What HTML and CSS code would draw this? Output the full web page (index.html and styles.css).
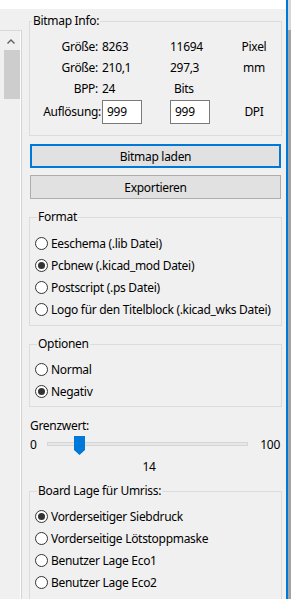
FILE: index.html
```html
<!DOCTYPE html>
<html>
<head>
<meta charset="utf-8">
<link rel="stylesheet" href="styles.css">
</head>
<body>
<div class="window">
  <div class="main">
    <div class="topbar"></div>
    <div class="body">
      <div class="leftcol">
        <div class="scrollpanel">
          <svg class="uparrow" width="8" height="5" viewBox="0 0 8 5"><path d="M0.5 4.5L4 1L7.5 4.5" fill="none" stroke="#606060" stroke-width="1.4"/></svg>
          <div class="thumb"></div>
        </div>
      </div>
      <div class="content">
        <fieldset class="group info">
          <legend>Bitmap Info:</legend>
          <div class="infogrid">
            <span class="lbl">Größe:</span><span>8263</span><span>11694</span><span class="unit">Pixel</span>
            <span class="lbl">Größe:</span><span>210,1</span><span>297,3</span><span class="unit">mm</span>
            <span class="lbl">BPP:</span><span>24</span><span class="bits">Bits</span><span class="unit"></span>
            <span class="lbl wide">Auflösung:</span><span><span class="field">999</span></span><span><span class="field">999</span></span><span class="unit">DPI</span>
          </div>
        </fieldset>
        <div class="btn primary">Bitmap laden</div>
        <div class="btn second">Exportieren</div>
        <fieldset class="group format">
          <legend>Format</legend>
          <div class="radio"><span class="circle"></span>Eeschema (.lib Datei)</div>
          <div class="radio"><span class="circle on"></span>Pcbnew (.kicad_mod Datei)</div>
          <div class="radio"><span class="circle"></span>Postscript (.ps Datei)</div>
          <div class="radio"><span class="circle"></span>Logo für den Titelblock (.kicad_wks Datei)</div>
        </fieldset>
        <fieldset class="group options">
          <legend>Optionen</legend>
          <div class="radio"><span class="circle"></span>Normal</div>
          <div class="radio"><span class="circle on"></span>Negativ</div>
        </fieldset>
        <div class="sliderlabel">Grenzwert:</div>
        <div class="slider">
          <span class="min">0</span>
          <div class="track">
            <svg class="knob" width="11" height="19" viewBox="0 0 11 19"><path d="M0 0H11V14L5.5 19L0 14Z" fill="#0078d7"/></svg>
          </div>
          <span class="max">100</span>
        </div>
        <div class="value">14</div>
        <fieldset class="group board">
          <legend>Board Lage für Umriss:</legend>
          <div class="radio"><span class="circle on"></span>Vorderseitiger Siebdruck</div>
          <div class="radio"><span class="circle"></span>Vorderseitige Lötstoppmaske</div>
          <div class="radio"><span class="circle"></span>Benutzer Lage Eco1</div>
          <div class="radio"><span class="circle"></span>Benutzer Lage Eco2</div>
        </fieldset>
      </div>
    </div>
  </div>
  <div class="blueline"></div>
  <div class="gutter"><div class="gutter-top"></div></div>
</div>
</body>
</html>
```
FILE: styles.css
```css
* { box-sizing: border-box; }
html, body { margin: 0; padding: 0; }
body {
  background: #f0f0f0;
  font-family: "Noto Sans", "Liberation Sans", sans-serif;
  font-size: 12px;
  letter-spacing: -0.3px;
  color: #000;
  width: 291px;
  height: 599px;
  overflow: hidden;
}
.window { display: flex; height: 599px; }
.main { width: 286px; display: flex; flex-direction: column; }
.topbar { height: 9px; background: #fff; flex: none; }
.body { display: flex; flex: 1; }
.leftcol { width: 22px; flex: none; padding-top: 21px; }
.scrollpanel {
  height: 100%;
  border-top: 1px solid #d9d9d9;
  border-right: 1px solid #d4d4d4;
  box-shadow: inset -1px 0 #fdfdfd;
  padding-top: 8px;
  display: flex;
  flex-direction: column;
  align-items: flex-start;
}
.uparrow { margin-left: 7px; display: block; }
.thumb { width: 16px; height: 49px; background: #cdcdcd; margin: 6px 0 0 4px; }
.content { flex: 1; display: flex; flex-direction: column; }
.blueline { width: 2px; background: #0078d7; flex: none; }
.gutter { width: 3px; background: #a3a3a3; flex: none; }
.gutter-top { height: 30px; background: #d6d6d6; }

.group {
  border: 1px solid #dcdcdc;
  margin: 0 4px 0 7px;
  padding: 0 0 0 5px;
  min-width: 0;
}
.group legend {
  margin-left: 2px;
  padding: 0 1px;
  line-height: 16px;
}
.info { margin-top: 4px; padding: 7px 0 11px 0; }
.infogrid {
  display: grid;
  grid-template-columns: 68px 72px 71px 1fr;
  column-gap: 0;
  grid-template-rows: 21px 21px 21px 25px;
  align-items: center;
}
.infogrid > span { line-height: 16px; }
.infogrid > span:nth-child(4n+2) { padding-left: 4px; }
.lbl { text-align: right; }
.lbl.wide { margin-left: -8px; margin-right: -3px; white-space: nowrap; }
.bits { padding-left: 4px; }
.unit { text-align: center; padding-right: 14px; }
.field {
  display: inline-block;
  width: 40px;
  height: 24px;
  background: #fff;
  border: 1px solid #7a7a7a;
  padding-left: 4px;
  line-height: 22px;
  vertical-align: middle;
}

.btn {
  height: 24px;
  margin: 0 5px 0 8px;
  background: #e1e1e1;
  display: flex;
  align-items: center;
  justify-content: center;
}
.primary { margin-top: 8px; border: 2px solid #0078d7; }
.second { margin-top: 7px; border: 1px solid #adadad; }

.radio { height: 22px; display: flex; align-items: center; white-space: nowrap; }
.circle {
  width: 13px;
  height: 13px;
  border: 1px solid #333;
  border-radius: 50%;
  background: #fff;
  margin-right: 3px;
  display: flex;
  align-items: center;
  justify-content: center;
  flex: none;
}
.circle.on::after {
  content: "";
  width: 7px;
  height: 7px;
  border-radius: 50%;
  background: #333;
}
.format { margin-top: 10px; padding-top: 7px; padding-bottom: 5px; }
.options { margin-top: 10px; padding-top: 6px; padding-bottom: 4px; }
.sliderlabel { margin: 11px 0 0 8px; line-height: 16px; }
.slider { display: flex; align-items: center; height: 20px; margin: 0 6px 0 8px; }
.min { width: 17px; }
.max { margin-left: 12px; }
.track {
  flex: 1;
  height: 4px;
  background: #e7e7e7;
  border: 1px solid #d6d6d6;
  position: relative;
}
.knob { position: absolute; left: 26px; top: -7px; }
.value { text-align: center; line-height: 16px; margin-top: 5px; padding-right: 10px; }
.board { margin-top: 8px; padding-top: 6px; padding-bottom: 10px; }
```
